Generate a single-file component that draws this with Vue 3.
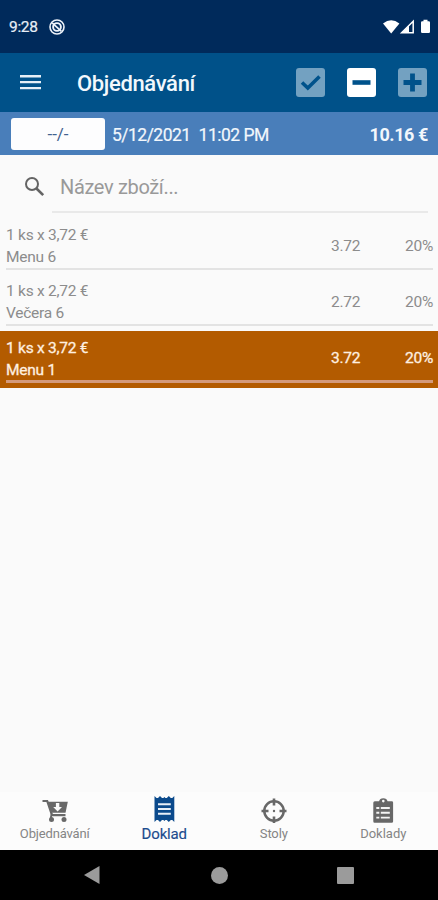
<script setup>
const rows = [
  { qty: '1 ks x 3,72 €', name: 'Menu 6', price: '3.72', vat: '20%' },
  { qty: '1 ks x 2,72 €', name: 'Večera 6', price: '2.72', vat: '20%' },
  { qty: '1 ks x 3,72 €', name: 'Menu 1', price: '3.72', vat: '20%', selected: true },
]
</script>

<template>
  <div class="screen">
    <div class="status">
      <span class="clock">9:28</span>
      <svg class="dnd" width="16" height="16" viewBox="0 0 16 16" fill="none" stroke="#eef3fa">
        <circle cx="8" cy="8" r="7" stroke-width="1.6" />
        <circle cx="8" cy="8" r="3.9" stroke-width="1.9" />
        <path d="M3.2 3.8l9.2 8.5" stroke-width="1.7" />
      </svg>
      <svg class="signals" width="48" height="16" viewBox="0 0 48 16">
        <path d="M0 4.6Q8.2-2 16.4 4.6L8.2 14.4z" fill="#fff" />
        <path d="M30.2 2.2v11.6H18.6z" fill="none" stroke="#fff" stroke-width="1.5" />
        <path d="M26 6.5v7.3h-7.4z" fill="#fff" />
        <path d="M40.5.8h4v1.4h1.3q1.2 0 1.2 1.2v9.4q0 1.2-1.2 1.2h-6.6q-1.2 0-1.2-1.2v-9.4q0-1.2 1.2-1.2h1.3z" fill="#fff" />
      </svg>
    </div>

    <header class="appbar">
      <svg width="22" height="18" viewBox="0 0 22 18" fill="#e6eff7">
        <path d="M0 1.1h21v2.3H0zM0 7h21v2.3H0zM0 12.9h21v2.3H0z" />
      </svg>
      <h1>Objednávání</h1>
      <div class="actions">
        <span class="action"><svg width="29" height="29" viewBox="0 0 29 29"><path d="M6 14.5l5.8 5.5L23.5 8.5" fill="none" stroke="#00528b" stroke-width="3.6" /></svg></span>
        <span class="action on"><svg width="29" height="29" viewBox="0 0 29 29"><path d="M5.5 14.5h18" stroke="#00528b" stroke-width="4.6" /></svg></span>
        <span class="action"><svg width="29" height="29" viewBox="0 0 29 29"><path d="M5.5 14.5h18M14.5 5.5v18" stroke="#00528b" stroke-width="4.8" /></svg></span>
      </div>
    </header>

    <div class="info">
      <span class="table">--/-</span>
      <span class="date"><span>5/12/2021</span><span>11:02 PM</span></span>
      <b class="total">10.16 €</b>
    </div>

    <div class="search">
      <svg width="20" height="20" viewBox="0 0 20 20" fill="none" stroke="#646464">
        <circle cx="7" cy="7" r="6" stroke-width="2" />
        <path d="M11.5 11.5l6.700 6.700" stroke-width="2.6" />
      </svg>
      <div class="field">Název zboží...</div>
    </div>

    <main class="list">
      <div v-for="(r, i) in rows" :key="i" class="row" :class="{ selected: r.selected }">
        <div class="inner">
          <div class="item"><div>{{ r.qty }}</div><div>{{ r.name }}</div></div>
          <span class="price">{{ r.price }}</span>
          <span class="vat">{{ r.vat }}</span>
        </div>
      </div>
    </main>

    <nav class="tabs">
      <div class="tab">
        <svg width="28" height="28" viewBox="0 0 28 28">
          <path d="M1.5 6h4.700l4.800 14.200H24.500" fill="none" stroke="#686868" stroke-width="2.2" />
          <path d="M6.500 6.700H26.800l-2.300 11H10.200z" fill="#686868" />
          <path d="M14.900 8h3.400v4h2.700l-4.400 4.400-4.400-4.400h2.700z" fill="#fafafa" />
          <path d="M10.800 18.500L9.700 23" stroke="#686868" stroke-width="1.800" />
          <circle cx="10.500" cy="24.500" r="2.500" fill="#686868" />
          <circle cx="23" cy="24.500" r="2.500" fill="#686868" />
        </svg>
        <span class="l1">Objednávání</span>
      </div>
      <div class="tab active">
        <svg width="28" height="28" viewBox="0 0 28 28">
          <path d="M4.500 1l2 1.900h1.500l2-1.900 2 1.900h1.400l1-1 1 1h1.400l2-1.900 2 1.900h1.500l2-1.900v26l-2-1.900h-1.500l-2 1.900-2-1.900h-1.400l-1 1-1-1h-1.400l-2 1.900-2-1.900h-1.500l-2 1.900z" fill="#0b4a8c" />
          <path d="M8 9.300h12.800M8 14h12.800M8 18.700h12.800" stroke="#e8eff8" stroke-width="1.900" />
        </svg>
        <span class="l2">Doklad</span>
      </div>
      <div class="tab">
        <svg width="28" height="28" viewBox="0 0 28 28" fill="none" stroke="#686868">
          <circle cx="14" cy="16" r="9.700" stroke-width="2.500" />
          <path d="M14 3.500v7M14 21.500v7M1.500 16h7M19.500 16h7" stroke-width="2.600" />
          <circle cx="14" cy="16" r="1.200" fill="#686868" stroke="none" />
        </svg>
        <span class="l3">Stoly</span>
      </div>
      <div class="tab">
        <svg width="28" height="28" viewBox="0 0 28 28">
          <path d="M5.800 6.300h4.300q.6-3 4.200-3t4.200 3h4.300q1.300 0 1.300 1.300v18.800q0 1.300-1.500 1.300h-17q-1.300 0-1.300-1.500v-18.400q0-1.500 1.500-1.500z" fill="#686868" />
          <circle cx="14.300" cy="6.100" r="1.300" fill="#fafafa" />
          <path d="M7.300 13h3M7.300 17.800h3M7.300 22.600h3M11.800 13h9M11.800 17.800h9M11.800 22.600h9" stroke="#f5f5f5" stroke-width="1.900" />
        </svg>
        <span class="l4">Doklady</span>
      </div>
    </nav>

    <div class="sysnav">
      <svg width="16" height="18" viewBox="0 0 16 18"><path d="M15.500 0v18L0 9z" fill="#9b9b9b" /></svg>
      <i class="home"></i>
      <i class="recent"></i>
    </div>
  </div>
</template>

<style>
body { background: #fafafa; }
</style>

<style scoped>
.screen { width: 438px; height: 900px; display: flex; flex-direction: column; background: #fafafa; font-family: Roboto, "Liberation Sans", sans-serif; overflow: hidden; white-space: nowrap; }
.status { height: 53px; flex: none; box-sizing: border-box; background: #002a5b; color: #e8eef6; display: flex; align-items: center; padding: 0 7px 0 9px; font-size: 15.5px; letter-spacing: -0.3px; }
.clock { width: 40px; -webkit-text-stroke: 0.2px; }
.signals { margin-left: auto; }
.appbar { height: 59px; flex: none; background: #005189; display: flex; align-items: center; padding: 0 11px 0 20px; }
h1 { margin: 2px 0 0 35px; font-size: 22px; font-weight: 500; letter-spacing: -0.35px; color: #f2f8fd; }
.actions { margin-left: auto; display: flex; gap: 22px; }
.action { width: 29px; height: 29px; border-radius: 3px; background: #73a1c1; }
.action.on { background: #fff; }
.action svg { display: block; }
.info { height: 43px; flex: none; background: #497eba; display: flex; align-items: center; padding: 0 10px 0 11px; color: #f2f7fc; font-size: 18px; }
.table { width: 94px; height: 32px; border-radius: 3px; background: #fdfdfe; color: #42628f; display: flex; align-items: center; justify-content: center; font-size: 17px; }
.date { margin: 2px 0 0 7px; display: flex; gap: 8px; font-size: 17.5px; letter-spacing: -0.52px; -webkit-text-stroke: 0.2px; }
.total { margin: 2px 0 0 auto; letter-spacing: -0.4px; }
.search { height: 64px; flex: none; display: flex; padding: 0 10px 0 25px; }
.search svg { margin-top: 22px; }
.field { flex: 1; margin-left: 7px; padding-left: 8px; height: 56px; line-height: 64px; border-bottom: 2px solid #e9e9e9; color: #999; font-size: 20px; letter-spacing: -0.35px; }
.list { flex: 1; }
.row { height: 56.2px; box-sizing: border-box; padding: 0 5px 0 6px; color: #8c8c8c; font-size: 15.5px; letter-spacing: -0.25px; }
.inner { height: 51px; box-sizing: border-box; border-bottom: 2px solid #e3e3e3; display: flex; align-items: center; }
.item { flex: 1; line-height: 22px; padding-top: 4.5px; }
.price { width: 60px; padding-top: 4px; }
.vat { width: 42px; padding-top: 4px; text-align: right; }
.selected { background: #b35b00; color: #fff0e0; -webkit-text-stroke: 0.3px; }
.selected .inner { border-bottom: 3px solid #d49a7b; height: 52px; }
.selected .item { padding-top: 6px; }
.tabs { height: 58px; flex: none; display: grid; grid-template-columns: repeat(4, 1fr); background: #fcfcfc; }
.tab { display: flex; flex-direction: column; align-items: center; padding-top: 3px; color: #858585; font-size: 13px; }
.tab svg { flex: none; }
.tab span { line-height: 18px; margin-top: 2px; }
.tab .l1, .tab .l3 { letter-spacing: -0.15px; }
.tab.active { color: #1d4c8e; font-size: 15px; letter-spacing: -0.15px; -webkit-text-stroke: 0.15px; }
.sysnav { height: 50px; flex: none; background: #000; display: flex; align-items: center; padding-left: 84px; }
.home { width: 17px; height: 17px; border-radius: 50%; background: #9b9b9b; margin-left: 111px; }
.recent { width: 17px; height: 17px; border-radius: 1px; background: #9b9b9b; margin-left: 109px; }
</style>
